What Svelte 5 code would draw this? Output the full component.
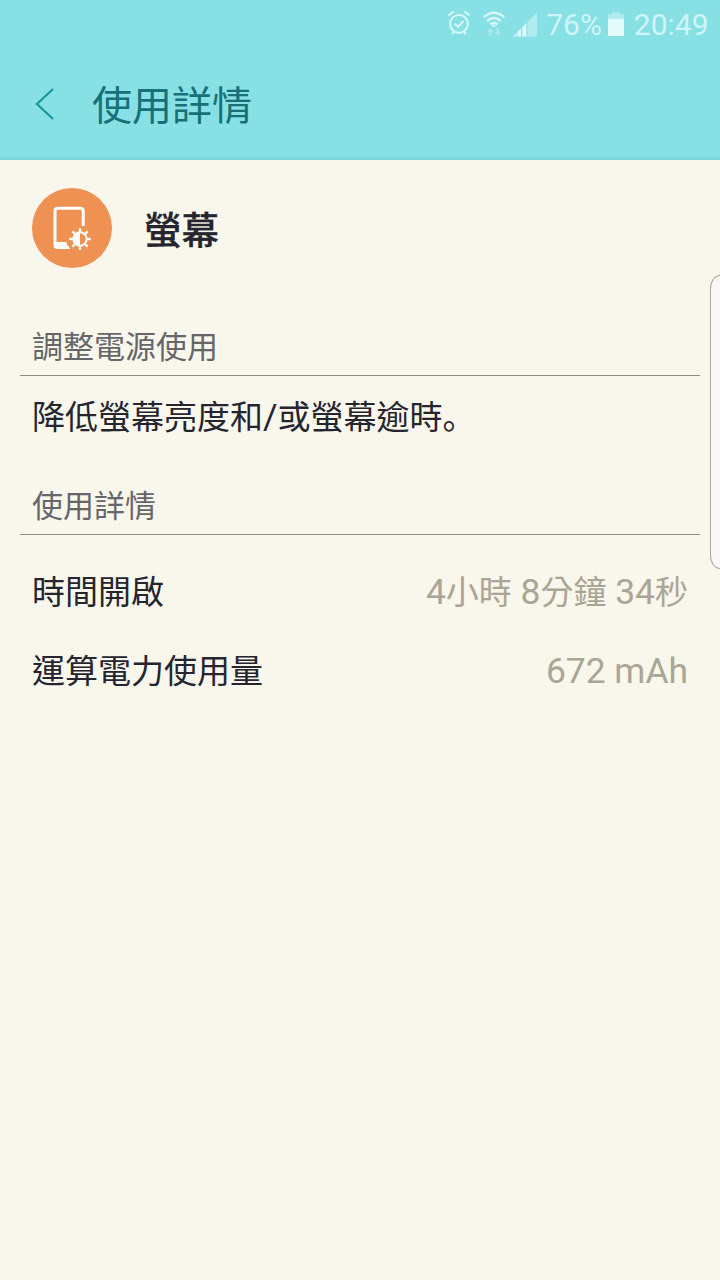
<script>
  const rows = [
    { label: '時間開啟', value: [['4', true], ['小時', false], [' 8', true], ['分鐘', false], [' 34', true], ['秒', false]] },
    { label: '運算電力使用量', value: [['672 mAh', true]] }
  ];
  const rays = [0, 45, 90, 135, 180, 225, 270, 315];
</script>

<div class="screen">
  <header>
    <div class="status">
      <svg class="alarm" width="24" height="26" viewBox="0 0 24 26" fill="none" stroke="#d8f8fa" stroke-width="2">
        <circle cx="12" cy="13.8" r="8.9" />
        <path d="M7.8 13.6l3.3 3.2 5.4-5.7M1.7 5.6Q3.5 2.8 6.8 1.7M17.4 1.7Q20.6 2.8 22.3 5.6M6.8 21.5l-1.4 2.8M17.2 21.5l1.4 2.8" />
      </svg>
      <svg class="wifi" width="24" height="26" viewBox="0 0 24 26" fill="none" stroke="#d8f8fa" stroke-width="2.4">
        <path d="M1.8 6.2Q12 -2.6 22.2 6.2M5.1 10Q12 3.9 18.9 10M8.3 13.5Q12 10.3 15.7 13.5" />
        <path d="M9.6 14.2h4.8L12 16.8z" fill="#d8f8fa" stroke="none" />
        <path d="M8.3 17l3.2 4H9.6v4H7v-4H5.1zM15.7 25l-3.2-4h1.9v-4H17v4h1.9z" fill="#a9e9ed" stroke="none" />
      </svg>
      <svg class="signal" width="24" height="25" viewBox="0 0 24 25">
        <path d="M0 24.5L24 .5v24z" fill="#b0ebef" />
        <path d="M0 24.5l3.2-3.2v3.2zM4.2 24.5v-4.2l3.8-3.8v8zM9.4 24.5v-9.4l4.2-4.2v13.6z" fill="#dcfafb" />
        <path d="M3.7 20v5M8.7 15.2v9.5M14 10v15" stroke="#87e0e4" />
      </svg>
      <span class="percent">76%</span>
      <svg class="battery" width="16" height="25" viewBox="0 0 16 25">
        <path d="M0 2.5h3.5L5 0h6l1.5 2.5H16V8H0z" fill="#b0ebef" />
        <path d="M0 7h16v17H0z" fill="#e4fbfc" />
      </svg>
      <span class="clock">20:49</span>
    </div>
    <div class="bar">
      <svg width="20" height="34" viewBox="0 0 20 34" fill="none" stroke="#18999e" stroke-width="2.3">
        <path d="M18 2L2 17l16 15" />
      </svg>
      <h1>使用詳情</h1>
    </div>
  </header>

  <main>
    <div class="subject">
      <svg width="80" height="80" viewBox="0 0 80 80">
        <circle cx="40" cy="40" r="40" fill="#ee9152" />
        <path d="M51.2 38V23q0-2.8-2.8-2.8H25.8q-2.8 0-2.8 2.8v33.8q0 2.8 2.8 2.8H37" fill="none" stroke="#fff" stroke-width="3" />
        <path d="M23 54h11.5q.2 4 3.8 7H26q-4 0-4-4z" fill="#fff" />
        <g transform="translate(48 51)">
          <circle r="6.7" fill="none" stroke="#fff" stroke-width="1.9" />
          <path d="M0-7A7 7 0 0 0 0 7z" fill="#fff" />
          {#each rays as angle}
            <path d="M0-7v-3.8" stroke="#fff" stroke-width="2.3" transform="rotate({angle})" />
          {/each}
        </g>
      </svg>
      <h2>螢幕</h2>
    </div>

    <section>
      <h3 class="first">調整電源使用</h3>
      <p>降低螢幕亮度和<span class="latin">/</span>或螢幕逾時<span class="stop">。</span></p>
    </section>

    <section>
      <h3 class="second">使用詳情</h3>
      <dl>
        {#each rows as row}
          <div class="row">
            <dt>{row.label}</dt>
            <dd>{#each row.value as [text, latin]}<span class:latin>{text}</span>{/each}</dd>
          </div>
        {/each}
      </dl>
    </section>
  </main>

  <div class="edge"></div>
</div>

<style>
  :global(body) { background: #f9f6eb; }
  .screen {
    position: relative;
    width: 720px;
    height: 1280px;
    overflow: hidden;
    background: #f9f6eb;
    color: #25252f;
    font-family: "Noto Sans CJK TC", Roboto, sans-serif;
  }
  svg { display: block; flex: none; }
  h1, h2, h3, p, dl, dt, dd { margin: 0; font-weight: 400; }
  header {
    height: 160px;
    box-sizing: border-box;
    background: linear-gradient(#87e0e4 0 155px, #79d4d9 160px);
  }
  .status {
    display: flex;
    justify-content: flex-end;
    align-items: flex-start;
    height: 48px;
    padding-right: 11.5px;
    box-sizing: border-box;
    font: 400 30px/50px Roboto, sans-serif;
    color: #cff5f8;
    white-space: pre;
  }
  .alarm { margin: 10px 11px 0 0; }
  .wifi { margin: 11px 7px 0 0; }
  .signal { margin: 12px 9.6px 0 0; }
  .percent { margin-right: 6.6px; }
  .battery { margin: 12px 9.3px 0 0; }
  .bar { display: flex; align-items: center; height: 112px; padding-left: 35px; }
  .bar h1 { margin-left: 37px; padding-bottom: 2px; font-size: 40px; line-height: 56px; color: #176f78; }
  .subject { display: flex; align-items: center; height: 80px; padding: 28px 32px 0; }
  h2 { margin-left: 32px; font-size: 37.5px; line-height: 56px; font-weight: 500; -webkit-text-stroke: 0.3px; }
  h3 {
    margin: 0 20px;
    padding: 0 12px;
    border-bottom: 1px solid #8f8c83;
    font-size: 31px;
    line-height: 46px;
    color: #66666a;
  }
  .first { margin-top: 54px; padding-bottom: 7px; }
  .second { margin-top: 44px; padding-bottom: 7px; }
  p { margin: 0 32px; padding-top: 15px; height: 46px; font-size: 33px; line-height: 48px; white-space: nowrap; }
  .latin { font-family: Roboto, sans-serif; font-size: 35.4px; }
  .stop { font-family: "Noto Sans CJK SC", sans-serif; }
  dl { padding: 17px 32px 0; }
  .row { display: flex; justify-content: space-between; align-items: center; height: 79px; font-size: 33px; line-height: 79px; }
  dt { padding-bottom: 2px; }
  dd { color: #aaa595; white-space: pre; }
  .edge {
    position: absolute;
    left: 710px;
    top: 275px;
    width: 20px;
    height: 292px;
    border: 1px solid #aaa9a5;
    border-radius: 10px / 14px;
    background: #f9f8f5;
  }
</style>
